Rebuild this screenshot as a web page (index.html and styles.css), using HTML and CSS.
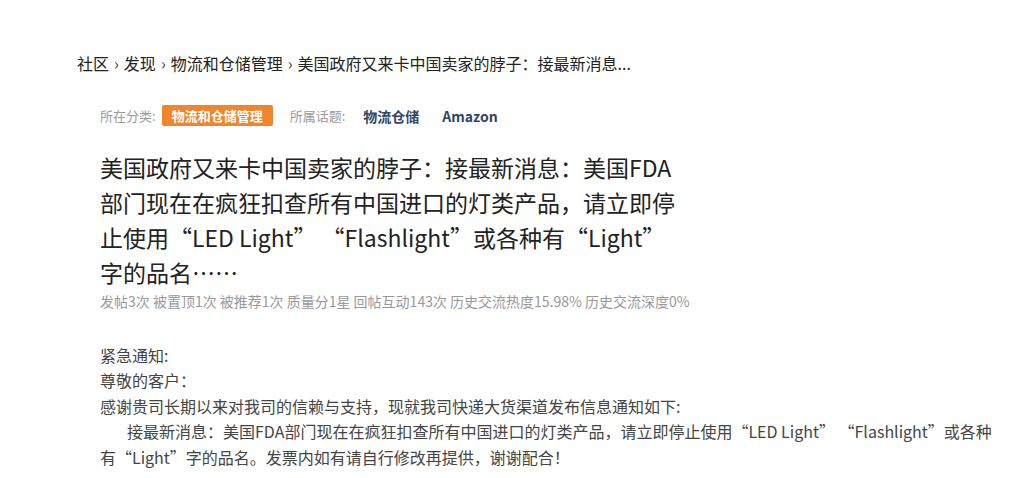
FILE: index.html
```html
<!DOCTYPE html>
<html lang="zh-CN">
<head>
<meta charset="utf-8">
<title>美国政府又来卡中国卖家的脖子</title>
<link rel="stylesheet" href="styles.css">
</head>
<body>
<div class="page">
  <nav class="breadcrumb">
    <a href="#">社区</a><span class="sep">›</span><a href="#">发现</a><span class="sep">›</span><a href="#">物流和仓储管理</a><span class="sep">›</span><span class="current">美国政府又来卡中国卖家的脖子：接最新消息...</span>
  </nav>
  <article class="article">
    <div class="meta">
      <span class="label">所在分类:</span>
      <span class="badge">物流和仓储管理</span>
      <span class="label label-topic">所属话题:</span>
      <a class="topic" href="#">物流仓储</a>
      <a class="topic" href="#">Amazon</a>
    </div>
    <h1 class="title">美国政府又来卡中国卖家的脖子：接最新消息：美国FDA部门现在在疯狂扣查所有中国进口的灯类产品，请立即停止使用“LED Light” “Flashlight”或各种有“Light”字的品名……</h1>
    <div class="stats">发帖3次 被置顶1次 被推荐1次 质量分1星 回帖互动143次 历史交流热度15.98% 历史交流深度0%</div>
    <div class="content">
      <p>紧急通知:</p>
      <p>尊敬的客户：</p>
      <p>感谢贵司长期以来对我司的信赖与支持，现就我司快递大货渠道发布信息通知如下:</p>
      <p class="indent">接最新消息：美国FDA部门现在在疯狂扣查所有中国进口的灯类产品，请立即停止使用“LED Light” “Flashlight”或各种有“Light”字的品名。发票内如有请自行修改再提供，谢谢配合！</p>
    </div>
  </article>
</div>
</body>
</html>
```

FILE: styles.css
```css
* { box-sizing: border-box; }
html, body {
  margin: 0;
  padding: 0;
  background: #ffffff;
}
body {
  font-family: "Noto Sans CJK SC", "Noto Sans", sans-serif;
  color: #333;
}
a { text-decoration: none; color: inherit; }

.page {
  padding: 51px 0 0 77px;
}

.breadcrumb {
  font-size: 16px;
  line-height: 24px;
  color: #222;
  white-space: nowrap;
}
.breadcrumb .sep {
  display: inline-block;
  margin: 0 5px;
  color: #444;
}

.article {
  margin-left: 23px;
}

.meta {
  margin-top: 30px;
  display: flex;
  align-items: center;
  height: 21px;
  font-size: 13px;
}
.meta .label {
  color: #9a9a9a;
}
.meta .badge {
  margin-left: 6px;
  background: #f0862b;
  color: #fff;
  font-weight: 700;
  height: 21px;
  line-height: 21px;
  padding: 0 10px;
  border-radius: 2px;
}
.meta .label-topic {
  margin-left: 17px;
}
.meta .topic {
  margin-left: 18px;
  font-size: 14px;
  font-weight: 700;
  color: #2f4566;
}
.meta .topic + .topic {
  margin-left: 23px;
}

.title {
  margin: 24px 0 0;
  width: 576px;
  font-size: 23px;
  line-height: 35px;
  font-weight: 400;
  color: #222;
}

.stats {
  margin-top: 1px;
  font-size: 14px;
  line-height: 20px;
  color: #999;
}

.content {
  margin-top: 32px;
  width: 895px;
  font-size: 16px;
  line-height: 25.4px;
  color: #444;
}
.content p {
  margin: 0;
}
.content .indent {
  text-indent: 27px;
}
```
